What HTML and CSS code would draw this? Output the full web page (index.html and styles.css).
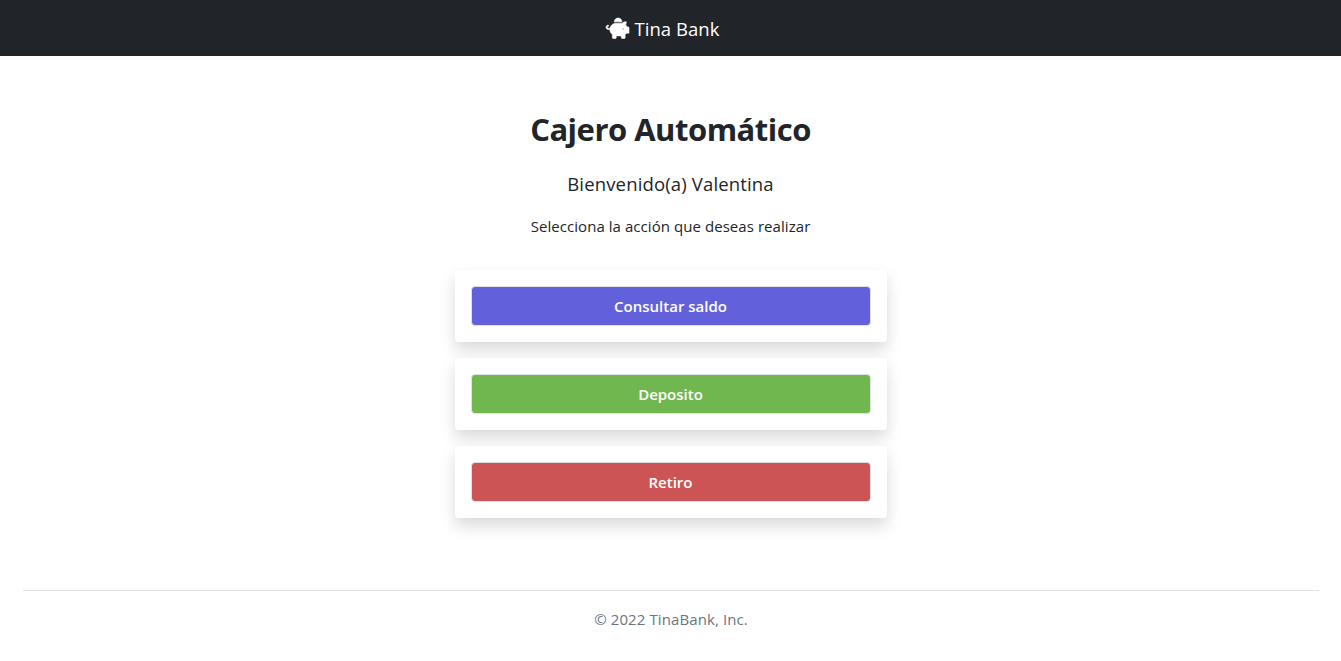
FILE: index.html
```html
<!DOCTYPE html>
<html lang="es">
<head>
<meta charset="utf-8">
<title>Tina Bank</title>
<link rel="stylesheet" href="styles.css">
</head>
<body>
<header class="navbar">
  <a class="brand">
    <svg class="brand-icon" viewBox="0 0 576 512" aria-hidden="true"><path fill="currentColor" stroke="currentColor" stroke-width="14" d="M560 224h-29.500c-8.800-20-21.600-37.700-37.400-52.500L512 96h-32c-29.400 0-55.400 13.500-73 34.300-7.600-1.100-15.100-2.300-23-2.300H256c-77.400 0-141.900 55-156.800 128H56c-14.800 0-26.500-13.500-23.500-28.800C34.700 215.800 45.400 208 57 208h1c3.300 0 6-2.700 6-6v-20c0-3.300-2.700-6-6-6-28.500 0-53.900 20.400-57.500 48.600C-3.900 258.800 22.700 288 56 288h40c0 52.200 25.400 98.100 64 127.300V496c0 8.800 7.200 16 16 16h64c8.800 0 16-7.200 16-16v-48h128v48c0 8.800 7.200 16 16 16h64c8.800 0 16-7.200 16-16v-80.700c11.800-8.900 22.300-19.400 31.300-31.300H560c8.800 0 16-7.200 16-16V240c0-8.800-7.200-16-16-16zm-128 64c-8.800 0-16-7.200-16-16s7.200-16 16-16 16 7.200 16 16-7.200 16-16 16zM256 96h128c5.400 0 10.700.4 15.900.8 0-.3.1-.5.1-.8 0-53-43-96-96-96s-96 43-96 96c0 2.100.5 4.100.6 6.200 15.200-3.900 31-6.200 47.400-6.200z"/></svg>
    <span class="brand-name">Tina Bank</span>
  </a>
</header>
<main class="main">
  <h1 class="title">Cajero Automático</h1>
  <p class="welcome">Bienvenido(a) Valentina</p>
  <p class="hint">Selecciona la acción que deseas realizar</p>
  <div class="actions">
    <div class="card"><button class="btn btn-balance">Consultar saldo</button></div>
    <div class="card"><button class="btn btn-deposit">Deposito</button></div>
    <div class="card"><button class="btn btn-withdraw">Retiro</button></div>
  </div>
</main>
<footer class="footer">© 2022 TinaBank, Inc.</footer>
</body>
</html>
```
FILE: styles.css
```css
* { box-sizing: border-box; }
body {
  margin: 0;
  background: #fff;
  color: #212529;
  font-family: "Open Sans", "Noto Sans", sans-serif;
  font-size: 15px;
  line-height: 24px;
}
.navbar {
  display: flex;
  justify-content: center;
  align-items: center;
  height: 56px;
  padding: 1px 15px 0 0;
  background: #212529;
}
.brand { display: flex; align-items: center; gap: 5px; color: #fff; }
.brand-icon { width: 23px; height: 20.500px; overflow: visible; }
.brand-name { font-size: 18.500px; letter-spacing: 0.05px; }
.main {
  display: flex;
  flex-direction: column;
  align-items: center;
  padding-top: 54px;
}
.title {
  margin: 0;
  font-size: 31px;
  font-weight: 700;
  line-height: 38px;
  letter-spacing: -0.5px;
}
.welcome {
  margin: 24px 0 0;
  font-size: 18.500px;
  line-height: 24px;
  letter-spacing: 0.15px;
}
.hint { margin: 18px 0 0; letter-spacing: 0.06px; }
.actions {
  display: flex;
  flex-direction: column;
  gap: 16px;
  width: 432px;
  margin-top: 32px;
}
.card {
  padding: 16px;
  background: #fff;
  border-radius: 4px;
  box-shadow: 0 8px 16px rgba(0, 0, 0, .15);
}
.btn {
  display: block;
  width: 100%;
  height: 40px;
  padding: 0;
  border: 1px solid #dee2e6;
  border-radius: 4px;
  color: #fff;
  font: 600 15px/24px "Open Sans", "Noto Sans", sans-serif;
}
.btn-balance { background: #6360dc; }
.btn-deposit { background: #70b750; }
.btn-withdraw { background: #cd5454; }
.footer {
  margin: 72px 22px 0 23px;
  padding-top: 16px;
  border-top: 1px solid #dee2e6;
  color: #6c757d;
  text-align: center;
  letter-spacing: 0.1px;
}
```
